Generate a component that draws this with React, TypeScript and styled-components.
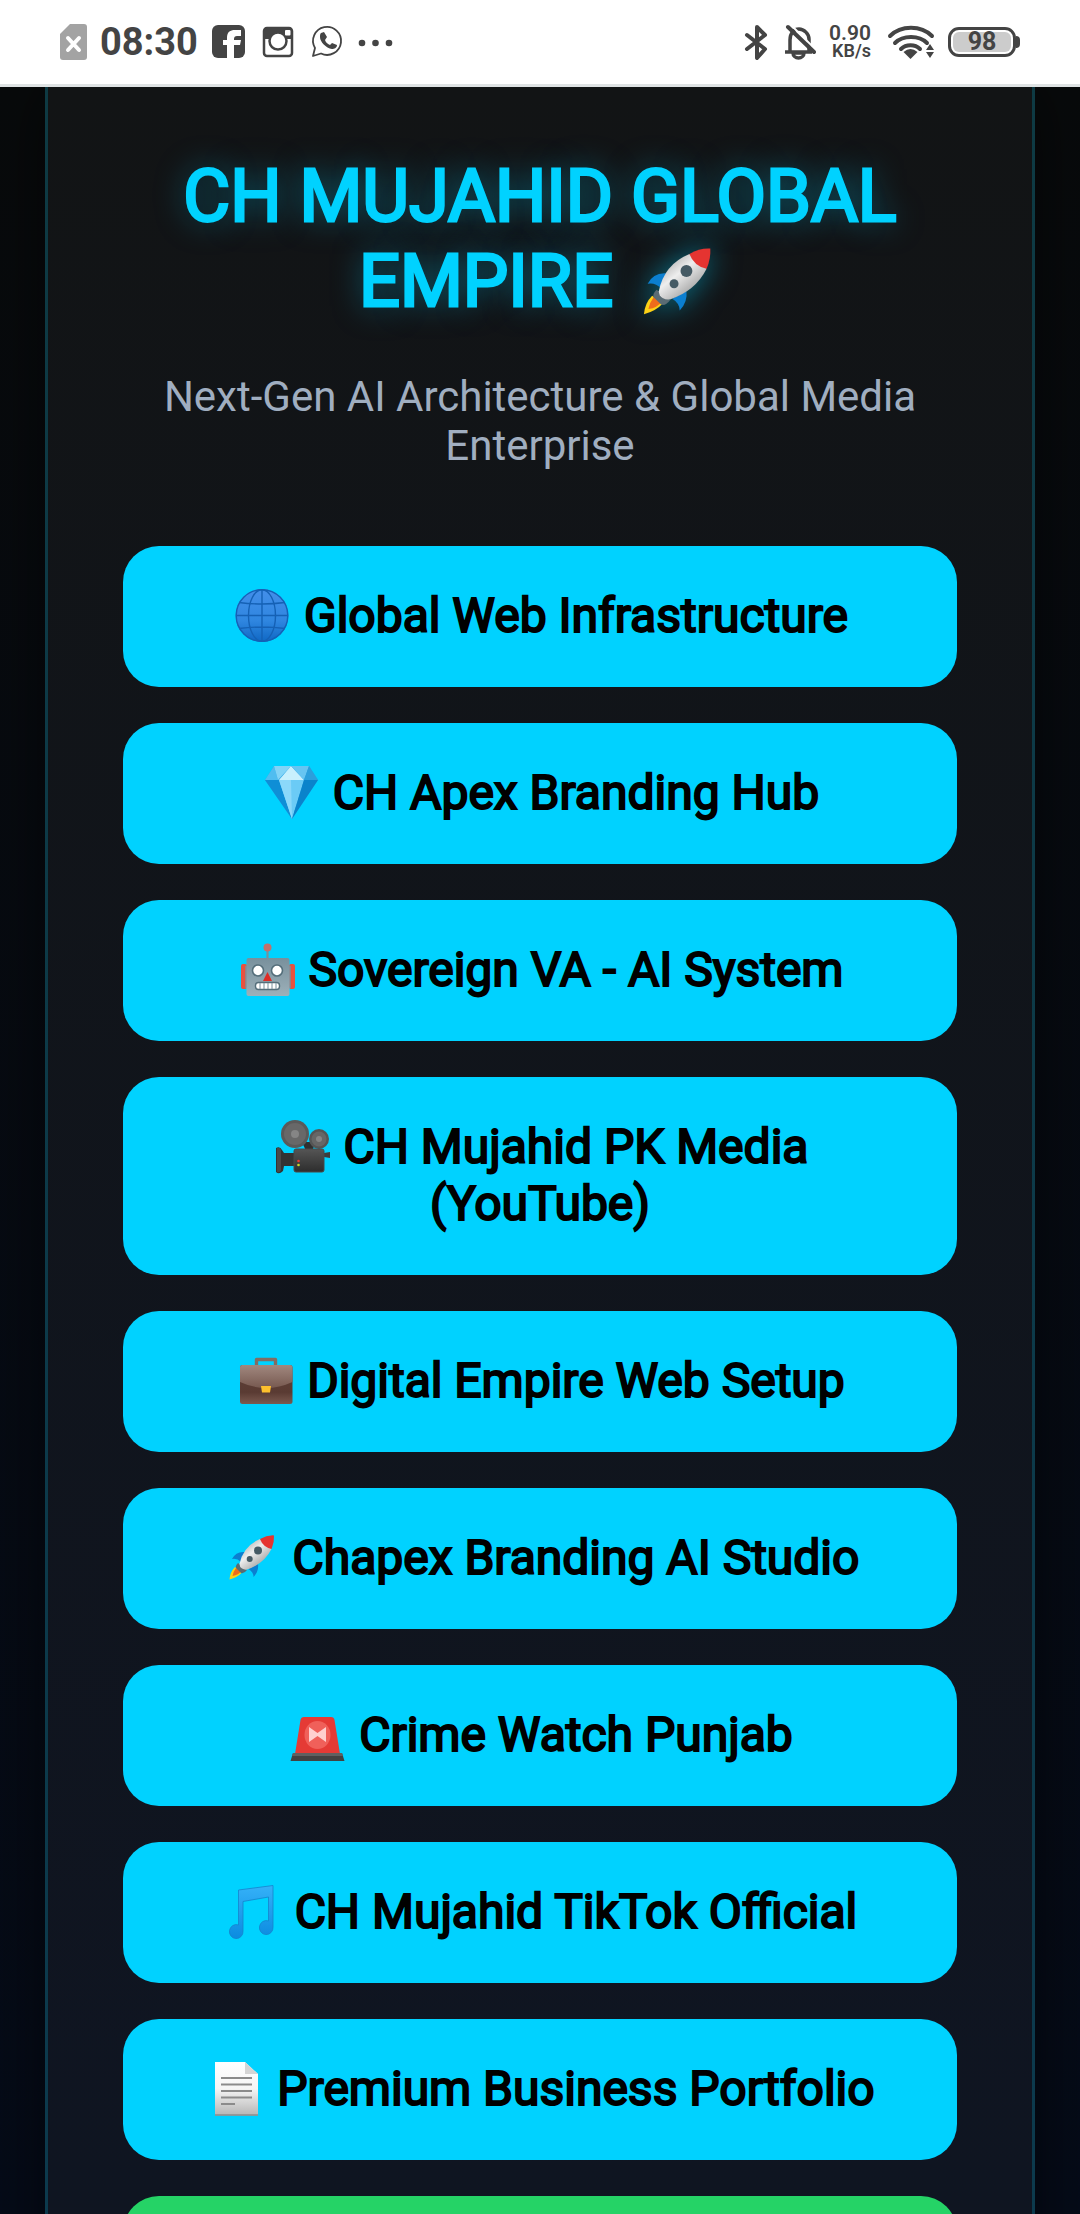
import React from 'react';
import styled, { createGlobalStyle } from 'styled-components';

const GlobalStyle = createGlobalStyle`
	* {
		box-sizing: border-box;
	}

	body {
		margin: 0;
		background: #050b18;
		font-family: Roboto, sans-serif;
	}
`;

const Screen = styled.div`
	display: flex;
	flex-direction: column;
	height: 100vh;
	overflow: hidden;
`;

const StatusBar = styled.header`
	display: flex;
	flex: none;
	justify-content: space-between;
	height: 87px;
	padding: 0 60px;
	background: #fff;
	border-bottom: 3px solid #dfe3e4;
	color: #444;
`;

const StatusGroup = styled.div`
	display: flex;
	align-items: center;
	gap: 13px;

	svg {
		display: block;
		flex: none;
	}
`;

const Clock = styled.time`
	font-size: 38px;
	font-weight: 700;
	line-height: 48px;
`;

const NetSpeed = styled.div`
	display: flex;
	flex-direction: column;
	align-items: flex-end;
	margin-right: 3px;
	font-size: 21px;
	font-weight: 600;
	line-height: 18px;
`;

const NetUnit = styled.span`
	font-size: 18px;
`;

const Battery = styled.div`
	display: flex;
	align-items: center;
`;

const BatteryCell = styled.div`
	width: 68px;
	height: 30px;
	padding: 2px;
	border: 3px solid #444;
	border-radius: 11px;
	background: #ccc content-box;
	font-size: 25px;
	font-weight: 700;
	line-height: 20px;
	text-align: center;
`;

const BatteryTip = styled.div`
	width: 4px;
	height: 12px;
	border-radius: 0 4px 4px 0;
	background: #444;
`;

const Page = styled.main`
	flex: 1;
	min-height: 0;
	padding: 0 45px;
	overflow: hidden;
	background: linear-gradient(180deg, #080a0b 0%, #050b18 100%);
`;

const Card = styled.section`
	min-height: 100%;
	padding: 67px 75px 75px;
	background: rgba(255, 255, 255, 0.045);
	border: solid rgba(0, 210, 255, 0.2);
	border-width: 0 3px;
	box-shadow: 0 0 60px rgba(0, 0, 0, 0.5);
	text-align: center;
`;

const Emoji = styled.svg`
	width: 60px;
	height: 57px;
	vertical-align: top;
`;

const Title = styled.h1`
	margin: 0 0 48px;
	color: #00d2ff;
	font-size: 72px;
	font-weight: 400;
	line-height: 85px;
	text-shadow: 0 0 30px rgba(0, 210, 255, 0.5);
	-webkit-text-stroke: 3px #00d2ff;

	${Emoji} {
		width: 90px;
		height: 85px;
		overflow: visible;
		filter: drop-shadow(0 0 15px rgba(0, 210, 255, 0.5));
	}
`;

const Subtitle = styled.p`
	margin: 0 0 76px;
	color: #a0aec0;
	font-size: 42px;
	line-height: 49px;
`;

const LinkList = styled.nav`
	display: flex;
	flex-direction: column;
	gap: 36px;
`;

const LinkButton = styled.a<{ $color?: string }>`
	display: block;
	min-height: 141px;
	padding: 41px 42px 43px;
	background: ${({ $color }) => $color || '#00d2ff'};
	border-radius: 36px;
	color: #000;
	font-size: 48px;
	line-height: 57px;
	text-decoration: none;
	-webkit-text-stroke: 2px #000;
`;

// Status bar icons

const SimIcon = () => (
	<svg width="27" height="36" viewBox="0 0 27 36">
		<path d="M10 0H24a3 3 0 0 1 3 3V33a3 3 0 0 1-3 3H3a3 3 0 0 1-3-3V10Z" fill="#a3a3a3" />
		<path d="M8 14 19 26M19 14 8 26" stroke="#fff" strokeWidth="4" strokeLinecap="round" />
	</svg>
);

const FacebookIcon = () => (
	<svg width="36" height="36" viewBox="0 0 36 36">
		<rect x="1" y="1" width="33" height="33" rx="6" fill="#444" />
		<path d="M16 34V21h-4v-5h4v-2c0-6 3-8 8-8h6v6h-4c-2 0-3 1-3 3v1h7l-1 5h-6v13Z" fill="#fff" />
	</svg>
);

const InstagramIcon = () => (
	<svg width="36" height="36" viewBox="0 0 36 36">
		<rect x="4" y="4" width="28" height="28" rx="3" fill="#fff" stroke="#444" strokeWidth="2.5" />
		<path d="M4 15V7a3 3 0 0 1 3-3h22a3 3 0 0 1 3 3v8h-6a9 9 0 0 1-16 0Z" fill="#444" />
		<circle cx="18" cy="17" r="8.5" fill="#fff" stroke="#444" strokeWidth="2.5" />
		<rect x="25" y="6" width="5.500" height="5.500" rx="1" fill="#fff" />
	</svg>
);

const WhatsappIcon = () => (
	<svg width="36" height="36" viewBox="0 0 36 36" fill="none">
		<path d="M4 32 6 24A14 14 0 1 1 12 29.500Z" stroke="#444" strokeWidth="1.800" strokeLinejoin="round" />
		<path d="M12 9l3-1 3 5-2 3c1 3 3 4 5 5l2-2 5 2c0 3-3 4-5 4-6-1-12-7-12-12 0-2 0-3 1-4Z" fill="#444" />
	</svg>
);

const MoreIcon = () => (
	<svg width="36" height="36" viewBox="0 0 36 36" fill="#444">
		<circle cx="4" cy="19" r="3.300" />
		<circle cx="17.500" cy="19" r="3.300" />
		<circle cx="31" cy="19" r="3.300" />
	</svg>
);

const BluetoothIcon = () => (
	<svg width="27" height="36" viewBox="0 0 27 36" fill="none" stroke="#444" strokeWidth="4" strokeLinejoin="round" strokeLinecap="round">
		<path d="M3 11 21 25 13 34V3l8 8L3 25" />
	</svg>
);

const BellOffIcon = () => (
	<svg width="32" height="36" viewBox="0 0 32 36" fill="none" stroke="#444" strokeWidth="3.500">
		<path d="M1 28H28M6 28V16c0-7 4-11 9-11s10 5 10 10v13" />
		<path d="M9 29a5.500 5 0 0 0 11 0Z" />
		<path d="M7 1 33 27" stroke="#fff" strokeWidth="2" />
		<path d="M4 3 30 28" strokeWidth="4" strokeLinecap="round" />
	</svg>
);

const WifiIcon = () => (
	<svg width="48" height="36" viewBox="0 0 48 36" fill="none" stroke="#444" strokeWidth="4" strokeLinecap="round">
		<path d="M3 12c11-11 31-11 42 0M8 19c8-8 24-8 32 0M14 25c5-5 14-5 19 0" />
		<path d="M23.500 35l-7-7q7-6 14 0Z" fill="#444" stroke="none" />
		<path d="M39 26l4-6 4 6ZM39 28h8l-4 6Z" fill="#444" stroke="none" />
	</svg>
);

// Emoji drawings, all on the same 60x57 box so they sit in a line of text

const GlobeEmoji = () => (
	<Emoji viewBox="0 0 60 57" fill="none" aria-hidden="true">
		<defs>
			<linearGradient id="globe" x1="0" y1="0" x2="0" y2="1">
				<stop offset="0" stopColor="#448fea" />
				<stop offset="0.600" stopColor="#2f86e0" />
				<stop offset="1" stopColor="#0f68c4" />
			</linearGradient>
		</defs>
		<circle cx="30" cy="28.500" r="26.500" fill="url(#globe)" />
		<g stroke="#1561b5" strokeWidth="1.400">
			<circle cx="30" cy="28.500" r="25.800" />
			<ellipse cx="30" cy="28.500" rx="13.500" ry="25.800" />
			<path d="M30 2.500V55M4 28.500H56M7 15.500q23 3 46 0M7 41.500q23-3 46 0" />
		</g>
	</Emoji>
);

const GemEmoji = () => (
	<Emoji viewBox="0 0 60 57" aria-hidden="true">
		<path d="M13 2H48L57 16 31 55 4 16Z" fill="#29a4e4" />
		<path d="M13 2 17 16H4Z" fill="#4fbdf0" />
		<path d="M13 2H30L17 16Z" fill="#82d4f7" />
		<path d="M30 2 43 16H18Z" fill="#c8f0fd" />
		<path d="M30 2H48L43 16Z" fill="#66c5f2" />
		<path d="M48 2 57 16H43Z" fill="#2b9fdc" />
		<path d="M4 16H18L31 55Z" fill="#0f8ed6" />
		<path d="M18 16H43L31 55Z" fill="#6bcbf6" />
		<path d="M18 16H30L31 55Z" fill="#8bd8fa" />
		<path d="M43 16H57L31 55Z" fill="#0a83cb" />
	</Emoji>
);

const RobotEmoji = () => (
	<Emoji viewBox="0 0 60 57" aria-hidden="true">
		<defs>
			<linearGradient id="robot" x1="0" y1="0" x2="0" y2="1">
				<stop offset="0" stopColor="#78909c" />
				<stop offset="1" stopColor="#9db0b9" />
			</linearGradient>
		</defs>
		<path d="M30.500 9V18" stroke="#78909c" strokeWidth="2.200" />
		<circle cx="30.500" cy="6.500" r="4" fill="#c2706b" />
		<rect x="4" y="23" width="6" height="25" rx="2" fill="#e8523f" />
		<rect x="52" y="23" width="6" height="25" rx="2" fill="#e8523f" />
		<path d="M9 25v22M53 25v22" stroke="#78909c" strokeWidth="1.500" />
		<rect x="9.500" y="17" width="43" height="38" rx="2" fill="url(#robot)" />
		<circle cx="21" cy="29.500" r="5.500" fill="#fff" stroke="#546e7a" strokeWidth="1.600" />
		<circle cx="40" cy="29.500" r="5.500" fill="#fff" stroke="#546e7a" strokeWidth="1.600" />
		<path d="M30.500 31 35 40H26Z" fill="#dd2c26" />
		<rect x="18.500" y="41.500" width="24" height="7" rx="3" fill="#fff" stroke="#546e7a" strokeWidth="1.400" />
		<path d="M23 42v6M27 42v6M31 42v6M35 42v6M39 42v6" stroke="#78909c" />
	</Emoji>
);

const CameraEmoji = () => (
	<Emoji viewBox="0 0 60 57" aria-hidden="true">
		<defs>
			<linearGradient id="camera" x1="0" y1="0" x2="0" y2="1">
				<stop offset="0" stopColor="#555" />
				<stop offset="1" stopColor="#2d2d2d" />
			</linearGradient>
		</defs>
		<path d="M30 24H44L40 33H34Z" fill="#303030" />
		<circle cx="23" cy="16" r="14" fill="#5a5a5a" />
		<circle cx="23" cy="16" r="11" fill="#686868" />
		<circle cx="23" cy="16" r="4" fill="#858585" />
		<circle cx="47" cy="21" r="10" fill="#555" />
		<circle cx="47" cy="21" r="7.500" fill="#666" />
		<circle cx="47" cy="21" r="3" fill="#858585" />
		<path d="M52 35l6-1v6l-6-1Z" fill="#3c3c3c" />
		<path d="M4 30q4-2 6 2l2 3h10v13H12l-1 5q-4 4-7 1Z" fill="#333" />
		<path d="M5 30q3-1 4 2v20q-1 3-4 2Z" fill="#494949" />
		<rect x="22" y="31" width="30" height="23" rx="2" fill="url(#camera)" stroke="#484848" />
		<circle cx="26.500" cy="43" r="1.300" fill="#e53935" />
		<circle cx="26.500" cy="47" r="1.300" fill="#c6d92b" />
	</Emoji>
);

const BriefcaseEmoji = () => (
	<Emoji viewBox="0 0 60 57" aria-hidden="true">
		<defs>
			<linearGradient id="case" x1="0" y1="0" x2="0" y2="1">
				<stop offset="0" stopColor="#5d4037" />
				<stop offset="0.700" stopColor="#5a3b33" />
				<stop offset="1" stopColor="#7b5a50" />
			</linearGradient>
			<linearGradient id="flap" x1="0" y1="0" x2="0" y2="1">
				<stop offset="0" stopColor="#a1887f" />
				<stop offset="1" stopColor="#775950" />
			</linearGradient>
		</defs>
		<path d="M21.500 14V7.500H40.500V14" fill="none" stroke="#806d64" strokeWidth="3.400" strokeLinejoin="round" />
		<rect x="5" y="13" width="52.500" height="39" rx="2.500" fill="url(#case)" />
		<path d="M5 15.500a2.500 2.500 0 0 1 2.500-2.500H55a2.500 2.500 0 0 1 2.500 2.500V30Q31 42 5 30Z" fill="url(#flap)" />
		<path d="M26 34h10l-1 6.500h-8Z" fill="#fdc02d" />
	</Emoji>
);

const RocketEmoji = () => (
	<Emoji viewBox="0 0 60 57" aria-hidden="true">
		<defs>
			<linearGradient id="hull" x1="0.200" y1="0.200" x2="0.700" y2="0.800">
				<stop offset="0" stopColor="#bdbdbd" />
				<stop offset="0.400" stopColor="#eee" />
				<stop offset="1" stopColor="#aaa" />
			</linearGradient>
		</defs>
		<path d="M11 30q4-8 13-7l-4 10q-4-4-9-3Z" fill="#0b7fd0" />
		<path d="M37 35q1 7-4.500 13-0-5-5-8Z" fill="#0b7fd0" />
		<path d="M14 38q-5 5-5.500 12.500 8-2 13-7.500Z" fill="#fdd116" />
		<path d="M15 39q-3 4-3.500 8 6-1 9-5Z" fill="#ee6c1b" />
		<path d="M17 34q-3 3-2 5l5 5q3 1 6-3Z" fill="#5a6b73" />
		<path d="M39 10Q22 17 18.500 35q0 3 2.500 4.500t5 1Q43 35 50.500 20Z" fill="url(#hull)" />
		<path d="M39 10q7-4 14-3.600Q53.500 13 50.500 20 42 18 39 10Z" fill="#e53431" />
		<circle cx="37" cy="21.500" r="4" fill="#455a64" />
		<circle cx="28.700" cy="30" r="3" fill="#455a64" />
	</Emoji>
);

const SirenEmoji = () => (
	<Emoji viewBox="0 0 60 57" aria-hidden="true">
		<path d="M17 11H44q3 0 3.500 3L53 48H8L13.500 14q.5-3 3.500-3Z" fill="#e53a35" />
		<ellipse cx="30.500" cy="29" rx="13" ry="14" fill="#f0605a" />
		<path d="M22 21l8.500 6 8.500-6v15l-8.500-6-8.500 6Z" fill="#ffd0cf" />
		<path d="M6 47H55l2.500 8H3.500Z" fill="#424242" />
		<path d="M6 47H55l1 3H5Z" fill="#606060" />
	</Emoji>
);

const NoteEmoji = () => (
	<Emoji viewBox="0 0 60 57" aria-hidden="true">
		<defs>
			<linearGradient id="note" x1="0" y1="0" x2="0" y2="1">
				<stop offset="0" stopColor="#35b1f8" />
				<stop offset="1" stopColor="#0b8be0" />
			</linearGradient>
		</defs>
		<path
			d="M15.500 7 50 2.500V44a6.800 7 0 1 1-4.500-6V14L20 18.500V48a6.800 7 0 1 1-4.500-6Z"
			fill="url(#note)"
			stroke="#1583cc"
			strokeWidth="0.800"
		/>
	</Emoji>
);

const DocumentEmoji = () => (
	<Emoji viewBox="0 0 60 57" aria-hidden="true">
		<defs>
			<linearGradient id="paper" x1="0" y1="0" x2="0" y2="1">
				<stop offset="0" stopColor="#fff" />
				<stop offset="0.500" stopColor="#f5f5f5" />
				<stop offset="1" stopColor="#b5b5b5" />
			</linearGradient>
		</defs>
		<path d="M10 2H40L53 14V55.500H10Z" fill="url(#paper)" />
		<path d="M40 2 53 14H40Z" fill="#d5d5d5" />
		<path d="M10 55H53" stroke="#8d8d8d" strokeWidth="1.500" />
		<path d="M16 18H47M16 24.500H47M16 31H47M16 37.500H47M16 44H30" stroke="#8b8b8b" strokeWidth="2" />
	</Emoji>
);

interface LinkInterface {
	Icon: React.FC,
	title: string
}

const links: LinkInterface[] = [
	{ Icon: GlobeEmoji, title: 'Global Web Infrastructure' },
	{ Icon: GemEmoji, title: 'CH Apex Branding Hub' },
	{ Icon: RobotEmoji, title: 'Sovereign VA - AI System' },
	{ Icon: CameraEmoji, title: 'CH Mujahid PK Media (YouTube)' },
	{ Icon: BriefcaseEmoji, title: 'Digital Empire Web Setup' },
	{ Icon: RocketEmoji, title: 'Chapex Branding AI Studio' },
	{ Icon: SirenEmoji, title: 'Crime Watch Punjab' },
	{ Icon: NoteEmoji, title: 'CH Mujahid TikTok Official' },
	{ Icon: DocumentEmoji, title: 'Premium Business Portfolio' }
];

const App = () => (
	<Screen>
		<GlobalStyle />
		<StatusBar>
			<StatusGroup>
				<SimIcon />
				<Clock>08:30</Clock>
				<FacebookIcon />
				<InstagramIcon />
				<WhatsappIcon />
				<MoreIcon />
			</StatusGroup>
			<StatusGroup>
				<BluetoothIcon />
				<BellOffIcon />
				<NetSpeed>
					<span>0.90</span>
					<NetUnit>KB/s</NetUnit>
				</NetSpeed>
				<WifiIcon />
				<Battery>
					<BatteryCell>98</BatteryCell>
					<BatteryTip />
				</Battery>
			</StatusGroup>
		</StatusBar>
		<Page>
			<Card>
				<Title>CH MUJAHID GLOBAL EMPIRE <RocketEmoji /></Title>
				<Subtitle>Next-Gen AI Architecture &amp; Global Media Enterprise</Subtitle>
				<LinkList>
					{links.map(({ Icon, title }) => (
						<LinkButton key={title} href="#">
							<Icon /> {title}
						</LinkButton>
					))}
					<LinkButton href="#" $color="#25d366" aria-label="WhatsApp" />
				</LinkList>
			</Card>
		</Page>
	</Screen>
);

export default App;
